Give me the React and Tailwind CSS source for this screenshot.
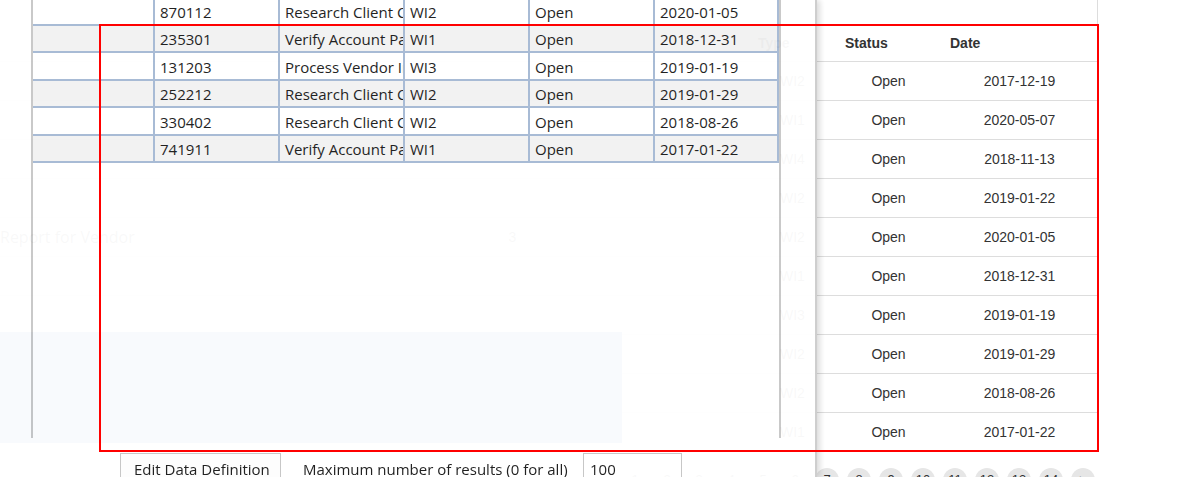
import React from "react";

const pageRows = [
  { type: "WI2", date: "2017-12-19" },
  { type: "WI1", date: "2020-05-07" },
  { type: "WI4", date: "2018-11-13" },
  { type: "WI2", date: "2019-01-22" },
  { type: "WI2", date: "2020-01-05", name: "Report for Vendor", count: "3" },
  { type: "WI1", date: "2018-12-31" },
  { type: "WI3", date: "2019-01-19" },
  { type: "WI2", date: "2019-01-29" },
  { type: "WI2", date: "2018-08-26" },
  { type: "WI1", date: "2017-01-22" },
];

const dialogRows = [
  { id: "870112", task: "Research Client Calls", type: "WI2", date: "2020-01-05" },
  { id: "235301", task: "Verify Account Payments", type: "WI1", date: "2018-12-31" },
  { id: "131203", task: "Process Vendor Invoices", type: "WI3", date: "2019-01-19" },
  { id: "252212", task: "Research Client Calls", type: "WI2", date: "2019-01-29" },
  { id: "330402", task: "Research Client Calls", type: "WI2", date: "2018-08-26" },
  { id: "741911", task: "Verify Account Payments", type: "WI1", date: "2017-01-22" },
];

const pages = ["<", "1", "2", "3", "4", "5", "6", "7", "8", "9", "10", "11", "12", "13", "14", ">"];

const pageCols = "grid grid-cols-[460px_105px_184px_87px_105px_157px]";
const dialogCols = "grid grid-cols-[122px_125px_125px_125px_125px_124px]";

function BackgroundPage() {
  return (
    <div className="relative w-[1098px] font-['Liberation_Sans',Arial,sans-serif] text-[14px] text-[#333]">
      <div className="border-r border-[#ddd] pt-[26px]">
        <div className={`${pageCols} h-[36px] items-center border-b border-[#ddd] font-bold`}>
          <div />
          <div />
          <div />
          <div className="pl-[9px]">Type</div>
          <div className="pl-[9px]">Status</div>
          <div className="pl-[9px]">Date</div>
        </div>
        {pageRows.map((row, i) => (
          <div
            key={i}
            className={`${pageCols} h-[39px] items-center border-b border-[#ddd] last:border-b-0`}
          >
            <div className="font-['Open_Sans',sans-serif] text-[16px]">{row.name ?? ""}</div>
            <div className="text-center">{row.count ?? ""}</div>
            <div />
            <div className="pl-[31px]">{row.type}</div>
            <div className="text-center">Open</div>
            <div className="text-center">{row.date}</div>
          </div>
        ))}
      </div>

      <div className="mt-[16px] flex gap-2 pl-[591px]">
        {pages.map((p) => (
          <span
            key={p}
            className="flex h-6 w-6 shrink-0 items-center justify-center rounded-full bg-[#e6e6e6] text-[13px] text-[#333]"
          >
            {p}
          </span>
        ))}
      </div>

      {/* faded highlight behind the dialog */}
      <div className="absolute left-0 top-[332px] h-[111px] w-[622px] bg-[#3758bc]" />
    </div>
  );
}

function DataDialog() {
  return (
    <div className="absolute inset-y-0 left-0 flex w-[817px] flex-col border-r-2 border-[#cdcdcd] bg-white font-['Open_Sans','Noto_Sans',sans-serif] text-[15px] text-[#1a1a1a] opacity-[0.97] shadow-[3px_0_6px_rgba(0,0,0,0.15)]">
      <div className="ml-[31px] h-[438px] w-[750px] shrink-0 overflow-hidden border-x-2 border-[#c8c8c8]">
        <div className="mt-[-1.4px]">
          {dialogRows.map((row, i) => (
            <div
              key={row.id}
              className={`${dialogCols} h-[27.4px] border-b-2 border-[#a6b9d4] ${
                i % 2 === 1 ? "bg-[#f2f2f2]" : "bg-white"
              }`}
            >
              {["", row.id, row.task, row.type, "Open", row.date].map((cell, j) => (
                <div
                  key={j}
                  className="flex items-center overflow-hidden whitespace-nowrap border-r-2 border-[#a6b9d4] pl-[5px] pt-[2px]"
                >
                  {cell}
                </div>
              ))}
            </div>
          ))}
        </div>
      </div>

      <div className="mt-[15px] flex items-start pl-[120px]">
        <button
          type="button"
          className="h-[32px] w-[161px] shrink-0 border border-[#c6c6c6] bg-[#fdfdfd] pl-[13px] text-left"
        >
          Edit Data Definition
        </button>
        <span className="ml-[22px] flex h-[32px] w-[280px] shrink-0 items-center whitespace-nowrap">
          Maximum number of results (0 for all)
        </span>
        <input
          readOnly
          value="100"
          className="h-[32px] w-[99px] border border-[#c6c6c6] bg-white pl-[6px] outline-none"
        />
      </div>
    </div>
  );
}

export default function App() {
  return (
    <div className="relative h-[477px] w-[1198px] overflow-hidden bg-white">
      <BackgroundPage />
      <DataDialog />
      <div className="pointer-events-none absolute left-[99px] top-[24px] h-[428px] w-[1000px] border-2 border-[#ff0000]" />
    </div>
  );
}
